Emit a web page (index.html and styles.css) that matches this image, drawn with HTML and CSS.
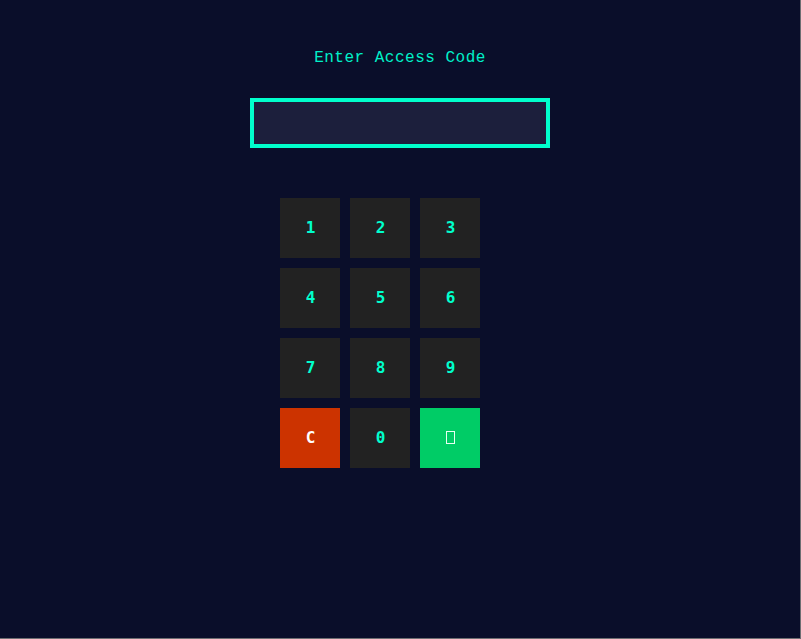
FILE: index.html
```html
<!DOCTYPE html>
<html>
<head>
<meta charset="utf-8">
<link rel="stylesheet" href="styles.css">
</head>
<body>
<main class="lock">
  <h1 class="title">Enter Access Code</h1>
  <div class="display"></div>
  <div class="keypad">
    <button class="key">1</button>
    <button class="key">2</button>
    <button class="key">3</button>
    <button class="key">4</button>
    <button class="key">5</button>
    <button class="key">6</button>
    <button class="key">7</button>
    <button class="key">8</button>
    <button class="key">9</button>
    <button class="key key-clear">C</button>
    <button class="key">0</button>
    <button class="key key-ok"><span class="tofu"></span></button>
  </div>
</main>
</body>
</html>
```
FILE: styles.css
```css
html, body {
  margin: 0;
  padding: 0;
  height: 100%;
}
body {
  background: #0a0e2a;
  box-shadow: inset -1px -1px 0 #6e6e72;
}
.lock {
  width: 800px;
  display: flex;
  flex-direction: column;
  align-items: center;
  padding-top: 49px;
}
.title {
  margin: 0;
  font-family: "Liberation Mono", "Courier New", monospace;
  font-weight: normal;
  font-size: 16px;
  letter-spacing: 0.5px;
  line-height: 19px;
  color: #00f0c8;
}
.display {
  box-sizing: border-box;
  margin-top: 30px;
  width: 300px;
  height: 50px;
  border: 4px solid #00ffcc;
  background: #1c1f3c;
}
.keypad {
  margin-top: 50px;
  width: 240px;
  display: grid;
  grid-template-columns: repeat(3, 60px);
  grid-auto-rows: 60px;
  gap: 10px;
}
.key {
  border: none;
  padding: 0 0 2px 1px;
  margin: 0;
  background: #222222;
  color: #00ffcc;
  font-family: "DejaVu Sans Mono", monospace;
  font-weight: bold;
  font-size: 16px;
  display: flex;
  align-items: center;
  justify-content: center;
}
.key-clear {
  background: #cc3300;
  color: #ffffff;
}
.key-ok {
  background: #00cc66;
}
.tofu {
  display: block;
  box-sizing: border-box;
  width: 9px;
  height: 13px;
  border: 1px solid #e8fff2;
}
```
